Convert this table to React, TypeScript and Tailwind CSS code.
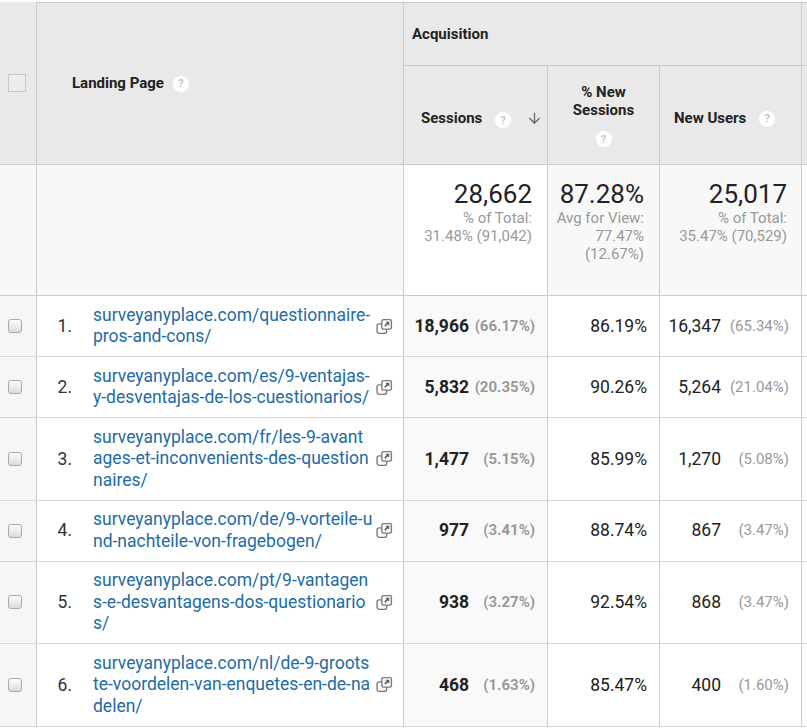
import React from 'react';

type Row = {
  n: number;
  lines: string[];
  sessions: string;
  sessionsPct: string;
  newSessions: string;
  newUsers: string;
  newUsersPct: string;
};

const rows: Row[] = [
  {
    n: 1,
    lines: ['surveyanyplace.com/questionnaire-', 'pros-and-cons/'],
    sessions: '18,966',
    sessionsPct: '(66.17%)',
    newSessions: '86.19%',
    newUsers: '16,347',
    newUsersPct: '(65.34%)',
  },
  {
    n: 2,
    lines: ['surveyanyplace.com/es/9-ventajas-', 'y-desventajas-de-los-cuestionarios/'],
    sessions: '5,832',
    sessionsPct: '(20.35%)',
    newSessions: '90.26%',
    newUsers: '5,264',
    newUsersPct: '(21.04%)',
  },
  {
    n: 3,
    lines: ['surveyanyplace.com/fr/les-9-avant', 'ages-et-inconvenients-des-question', 'naires/'],
    sessions: '1,477',
    sessionsPct: '(5.15%)',
    newSessions: '85.99%',
    newUsers: '1,270',
    newUsersPct: '(5.08%)',
  },
  {
    n: 4,
    lines: ['surveyanyplace.com/de/9-vorteile-u', 'nd-nachteile-von-fragebogen/'],
    sessions: '977',
    sessionsPct: '(3.41%)',
    newSessions: '88.74%',
    newUsers: '867',
    newUsersPct: '(3.47%)',
  },
  {
    n: 5,
    lines: ['surveyanyplace.com/pt/9-vantagen', 's-e-desvantagens-dos-questionario', 's/'],
    sessions: '938',
    sessionsPct: '(3.27%)',
    newSessions: '92.54%',
    newUsers: '868',
    newUsersPct: '(3.47%)',
  },
  {
    n: 6,
    lines: ['surveyanyplace.com/nl/de-9-groots', 'te-voordelen-van-enquetes-en-de-na', 'delen/'],
    sessions: '468',
    sessionsPct: '(1.63%)',
    newSessions: '85.47%',
    newUsers: '400',
    newUsersPct: '(1.60%)',
  },
];

function Help() {
  return (
    <span className="inline-flex h-4 w-4 shrink-0 items-center justify-center rounded-full bg-white text-[11px] font-bold leading-none text-[#c6c6c6]">
      ?
    </span>
  );
}

function SortArrow() {
  return (
    <svg viewBox="0 0 24 24" className="h-[17px] w-[17px]" fill="#6f6f6f">
      <path d="M20 12l-1.41-1.41L13 16.17V4h-2v12.17l-5.58-5.59L4 12l8 8 8-8z" />
    </svg>
  );
}

function OpenIcon() {
  return (
    <svg viewBox="0 0 16 16" className="h-[17px] w-[17px] shrink-0">
      <rect x="1" y="5.5" width="9" height="9" rx="2" fill="#fff" stroke="#7a7a7a" strokeWidth="1.3" />
      <rect x="5.5" y="1.5" width="9" height="9" rx="1.5" fill="#fff" stroke="#7a7a7a" strokeWidth="1.3" />
      <path d="M8.3 7.7 L11.6 4.4" stroke="#5e5e5e" strokeWidth="1.5" />
      <path d="M8.8 3.5 H12.5 V7.2 Z" fill="#5e5e5e" />
    </svg>
  );
}

function RowCheckbox() {
  return (
    <span className="block h-[14px] w-[14px] rounded-[3px] border border-[#a9a9a9] bg-gradient-to-b from-[#fdfdfd] to-[#dcdcdc]" />
  );
}

export default function App() {
  const head = 'bg-[#e9e9e9] border-[#cbcbcb]';
  const rowLine = 'border-b border-[#d8d8d8]';

  return (
    <div className="min-h-screen bg-white pt-[2px] font-['Roboto','Liberation_Sans',sans-serif] text-[#222]">
      <div className="grid w-[807px] grid-cols-[37px_367px_144px_112px_142px_1fr]">
        {/* header */}
        <div className={`row-span-2 flex items-center border-r border-b pl-[8px] ${head}`}>
          <span className="block h-[18px] w-[18px] border border-[#c8c8c8] bg-[#ececec]" />
        </div>
        <div className={`row-span-2 flex items-center gap-[9px] border-t border-r border-b pl-[35px] ${head}`}>
          <span className="text-[15px] font-bold">Landing Page</span>
          <Help />
        </div>
        <div className={`col-span-3 flex h-[64px] items-center border-t border-r border-b pl-[8px] ${head}`}>
          <span className="text-[15px] font-bold">Acquisition</span>
        </div>
        <div className={`border-t border-b ${head}`} />

        <div className={`flex h-[99px] items-center border-r border-b pl-[17px] pr-[4px] pt-[7px] ${head}`}>
          <span className="text-[15px] font-bold">Sessions</span>
          <span className="ml-[13px]">
            <Help />
          </span>
          <span className="ml-auto">
            <SortArrow />
          </span>
        </div>
        <div className={`flex flex-col items-center justify-center border-r border-b pt-[2px] text-center ${head}`}>
          <span className="text-[15px] font-bold leading-[18px]">% New</span>
          <span className="text-[15px] font-bold leading-[18px]">Sessions</span>
          <span className="mt-[7px]">
            <Help />
          </span>
        </div>
        <div className={`flex items-center gap-[13px] border-r border-b pl-[14px] pt-[7px] ${head}`}>
          <span className="text-[15px] font-bold">New Users</span>
          <Help />
        </div>
        <div className={`border-b ${head}`} />

        {/* totals */}
        <div className="h-[131px] border-r border-b border-[#cbcbcb] bg-[#f8f8f8]" />
        <div className="border-r border-b border-[#cbcbcb] bg-[#f8f8f8]" />
        <div className="flex flex-col items-end border-r border-b border-[#cbcbcb] bg-white pr-[15px] pt-[14px]">
          <span className="text-[26px] leading-[30px]">28,662</span>
          <span className="text-[15px] leading-[18px] text-[#999]">% of Total:</span>
          <span className="text-[15px] leading-[18px] text-[#999]">31.48% (91,042)</span>
        </div>
        <div className="flex flex-col items-end border-r border-b border-[#cbcbcb] bg-[#f8f8f8] pr-[15px] pt-[14px]">
          <span className="text-[26px] leading-[30px]">87.28%</span>
          <span className="text-[15px] leading-[18px] text-[#999]">Avg for View:</span>
          <span className="text-[15px] leading-[18px] text-[#999]">77.47%</span>
          <span className="text-[15px] leading-[18px] text-[#999]">(12.67%)</span>
        </div>
        <div className="flex flex-col items-end border-r border-b border-[#cbcbcb] bg-[#f8f8f8] pr-[14px] pt-[14px]">
          <span className="text-[26px] leading-[30px]">25,017</span>
          <span className="text-[15px] leading-[18px] text-[#999]">% of Total:</span>
          <span className="text-[15px] leading-[18px] text-[#999]">35.47% (70,529)</span>
        </div>
        <div className="border-b border-[#cbcbcb] bg-white" />

        {/* rows */}
        {rows.map((r) => (
          <React.Fragment key={r.n}>
            <div className={`flex items-center border-r border-r-[#cbcbcb] bg-[#f6f6f6] pl-[8px] ${rowLine}`}>
              <RowCheckbox />
            </div>
            <div className={`flex items-center border-r border-r-[#cbcbcb] bg-white py-[8.5px] pl-[12px] pr-[10px] ${rowLine}`}>
              <span className="w-[23px] text-right text-[17.5px] text-[#333]">{r.n}.</span>
              <div className="ml-[21px] flex-1 text-[17.5px] leading-[21.5px] text-[#226ba5]">
                {r.lines.map((l) => (
                  <div key={l} className="whitespace-nowrap">
                    {l}
                  </div>
                ))}
              </div>
              <OpenIcon />
            </div>
            <div className={`flex items-center justify-end border-r border-r-[#cbcbcb] bg-[#f9f9f9] pr-[12px] ${rowLine}`}>
              <span className="text-[17.5px] font-bold">{r.sessions}</span>
              <span className="w-[66px] text-right text-[15px] font-bold text-[#999]">{r.sessionsPct}</span>
            </div>
            <div className={`flex items-center justify-end border-r border-r-[#cbcbcb] bg-white pr-[12px] ${rowLine}`}>
              <span className="text-[17.5px]">{r.newSessions}</span>
            </div>
            <div className={`flex items-center justify-end border-r border-r-[#cbcbcb] bg-white pr-[12px] ${rowLine}`}>
              <span className="text-[17.5px]">{r.newUsers}</span>
              <span className="w-[68px] text-right text-[15px] text-[#999]">{r.newUsersPct}</span>
            </div>
            <div className={`bg-white ${rowLine}`} />
          </React.Fragment>
        ))}
      </div>
    </div>
  );
}
